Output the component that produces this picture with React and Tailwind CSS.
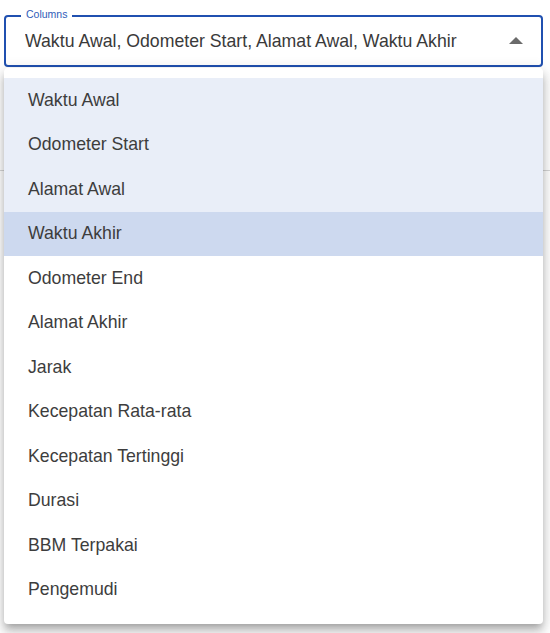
import React from 'react';

const columns = [
  { label: 'Waktu Awal', selected: true },
  { label: 'Odometer Start', selected: true },
  { label: 'Alamat Awal', selected: true },
  { label: 'Waktu Akhir', selected: true, focused: true },
  { label: 'Odometer End' },
  { label: 'Alamat Akhir' },
  { label: 'Jarak' },
  { label: 'Kecepatan Rata-rata' },
  { label: 'Kecepatan Tertinggi' },
  { label: 'Durasi' },
  { label: 'BBM Terpakai' },
  { label: 'Pengemudi' },
];

const App = () => {
  const value = columns.filter(c => c.selected).map(c => c.label).join(', ');

  return (
    <div className="relative w-[550px] h-[633px] bg-white overflow-hidden font-['Liberation_Sans',Arial,sans-serif]">
      {/* page content behind the menu */}
      <div className="pt-[15px] px-[4px] pr-[7px]">
        <div className="relative h-[52px] rounded-[4px] border-2 border-[#2050b0] flex items-center pl-[19px] pr-[18px]">
          <span className="absolute -top-[10px] left-[15px] px-[5px] bg-white text-[10.5px] leading-[14px] text-[#2f5db8]">
            Columns
          </span>
          <span className="flex-1 text-[17.7px] text-[#3a3a3a] truncate">{value}</span>
          <svg width="14" height="8" viewBox="0 0 14 8">
            <path d="M0 7 L7 0 L14 7 Z" fill="#6b6b6b" />
          </svg>
        </div>
      </div>
      <div className="mt-[103px] h-px bg-[#d6d6d6]" />

      {/* dropdown menu */}
      <div className="absolute left-[4px] top-[68px] w-[539px] rounded-[4px] bg-white pt-[10px] pb-[12px] shadow-[0_5px_6px_-3px_rgba(0,0,0,0.2),0_8px_10px_1px_rgba(0,0,0,0.14),0_3px_14px_2px_rgba(0,0,0,0.12)]">
        {columns.map(c => (
          <div
            key={c.label}
            className={`h-[44.5px] flex items-center pl-[24px] text-[17.7px] text-[#3d3d3d] ${
              c.focused ? 'bg-[#cdd9ef]' : c.selected ? 'bg-[#e9eef8]' : 'bg-white'
            }`}
          >
            {c.label}
          </div>
        ))}
      </div>
    </div>
  );
};

export default App;
